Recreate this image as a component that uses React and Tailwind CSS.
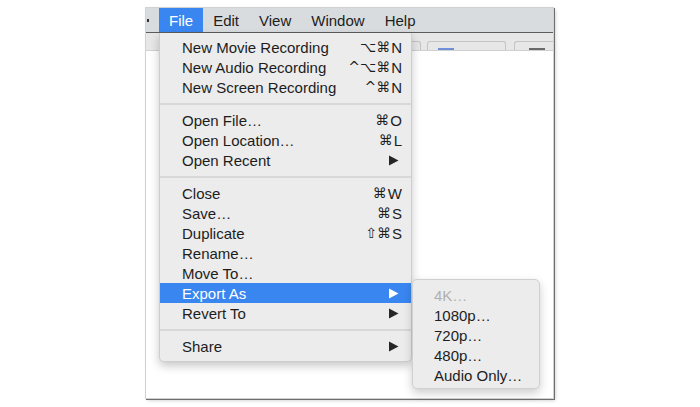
import React from "react";

const groups = [
  [
    { label: "New Movie Recording", key: "⌥⌘N" },
    { label: "New Audio Recording", key: "^⌥⌘N" },
    { label: "New Screen Recording", key: "^⌘N" },
  ],
  [
    { label: "Open File…", key: "⌘O" },
    { label: "Open Location…", key: "⌘L" },
    { label: "Open Recent", arrow: true },
  ],
  [
    { label: "Close", key: "⌘W" },
    { label: "Save…", key: "⌘S" },
    { label: "Duplicate", key: "⇧⌘S" },
    { label: "Rename…" },
    { label: "Move To…" },
    { label: "Export As", arrow: true, active: true },
    { label: "Revert To", arrow: true },
  ],
  [{ label: "Share", arrow: true }],
];

const exportItems = [
  { label: "4K…", disabled: true },
  { label: "1080p…" },
  { label: "720p…" },
  { label: "480p…" },
  { label: "Audio Only…" },
];

function Arrow({ color }) {
  return (
    <svg width="11" height="11" viewBox="0 0 11 11" className="mr-[3px]">
      <polygon points="1,0.5 10.5,5.5 1,10.5" fill={color} />
    </svg>
  );
}

function MenuRow({ item }) {
  const text = item.active ? "text-white" : "text-[#1d1d1d]";
  return (
    <div
      className={`flex items-center justify-between h-[20px] pl-[22px] pr-[9px] ${
        item.active ? "bg-[#3a86f1]" : ""
      } ${text}`}
    >
      <span>{item.label}</span>
      {item.key && (
        <span className="flex items-center">
          <span className="font-['DejaVu_Sans',sans-serif] text-[14px] mr-[1px]">
            {item.key.slice(0, -1)}
          </span>
          <span>{item.key.slice(-1)}</span>
        </span>
      )}
      {item.arrow && <Arrow color={item.active ? "#ffffff" : "#262626"} />}
    </div>
  );
}

export default function App() {
  return (
    <div className="w-[700px] h-[407px] bg-white pl-[146px] pt-[8px] font-['Liberation_Sans',Arial,sans-serif] text-[15px] leading-none">
      <div className="relative w-[407px] h-[390px] bg-white shadow-[0_0_0_1px_#d2d2d2,1px_1px_0_1px_#6e6e6e,2px_2px_4px_rgba(0,0,0,0.25)]">
        {/* menu bar */}
        <div className="flex items-center h-[25px] bg-[#d9dcde] border-b border-[#5c5c5c] text-[#1d1d1d]">
          <div className="ml-[1px] w-[2px] h-[3px] bg-[#333]" />
          <div className="ml-[10px] h-[24px] px-[10px] flex items-center bg-[#3a86f1] text-white">
            File
          </div>
          <div className="px-[10px]">Edit</div>
          <div className="px-[10px]">View</div>
          <div className="px-[10px]">Window</div>
          <div className="px-[10px]">Help</div>
        </div>

        {/* toolbar strip with tabs */}
        <div className="h-[18px] bg-[#e7e7e7] border-b border-[#d0d0d0] flex items-end pl-[266px]">
          <div className="w-[12px] h-[9px] border-t border-r border-[#c4c4c4] rounded-tr-[3px]" />
          <div className="ml-[6px] w-[100px] h-[9px] border-t border-x border-[#c4c4c4] rounded-t-[3px] flex justify-start pl-[10px]">
            <div className="mt-auto w-[16px] h-[2px] bg-[#6f8fd8]" />
          </div>
          <div className="ml-[8px] w-[46px] h-[9px] border-t border-l border-[#c4c4c4] rounded-tl-[3px] pl-[14px] flex">
            <div className="mt-auto w-[16px] h-[2px] bg-[#6a6a6a]" />
          </div>
        </div>

        {/* file menu */}
        <div className="absolute left-[13px] top-[25px] w-[253px] pt-[4px] pb-[5px] bg-[#ececec] rounded-b-[5px] border-x border-b border-[#cdcdcd] shadow-[0_4px_10px_rgba(0,0,0,0.22)]">
          {groups.map((group, gi) => (
            <div key={gi}>
              {gi > 0 && (
                <div className="h-[13px] flex items-center">
                  <div className="w-full h-[2px] bg-[#d8d8d8]" />
                </div>
              )}
              {group.map((item) => (
                <MenuRow key={item.label} item={item} />
              ))}
            </div>
          ))}
        </div>

        {/* export submenu */}
        <div className="absolute left-[266px] top-[271px] w-[128px] h-[110px] py-[5px] bg-[#ececec] rounded-[5px] border border-[#d0d0d0] shadow-[0_4px_10px_rgba(0,0,0,0.2)]">
          {exportItems.map((item) => (
            <div
              key={item.label}
              className={`h-[20px] flex items-center pl-[21px] ${
                item.disabled ? "text-[#b0b0b0]" : "text-[#1d1d1d]"
              }`}
            >
              {item.label}
            </div>
          ))}
        </div>
      </div>
    </div>
  );
}
